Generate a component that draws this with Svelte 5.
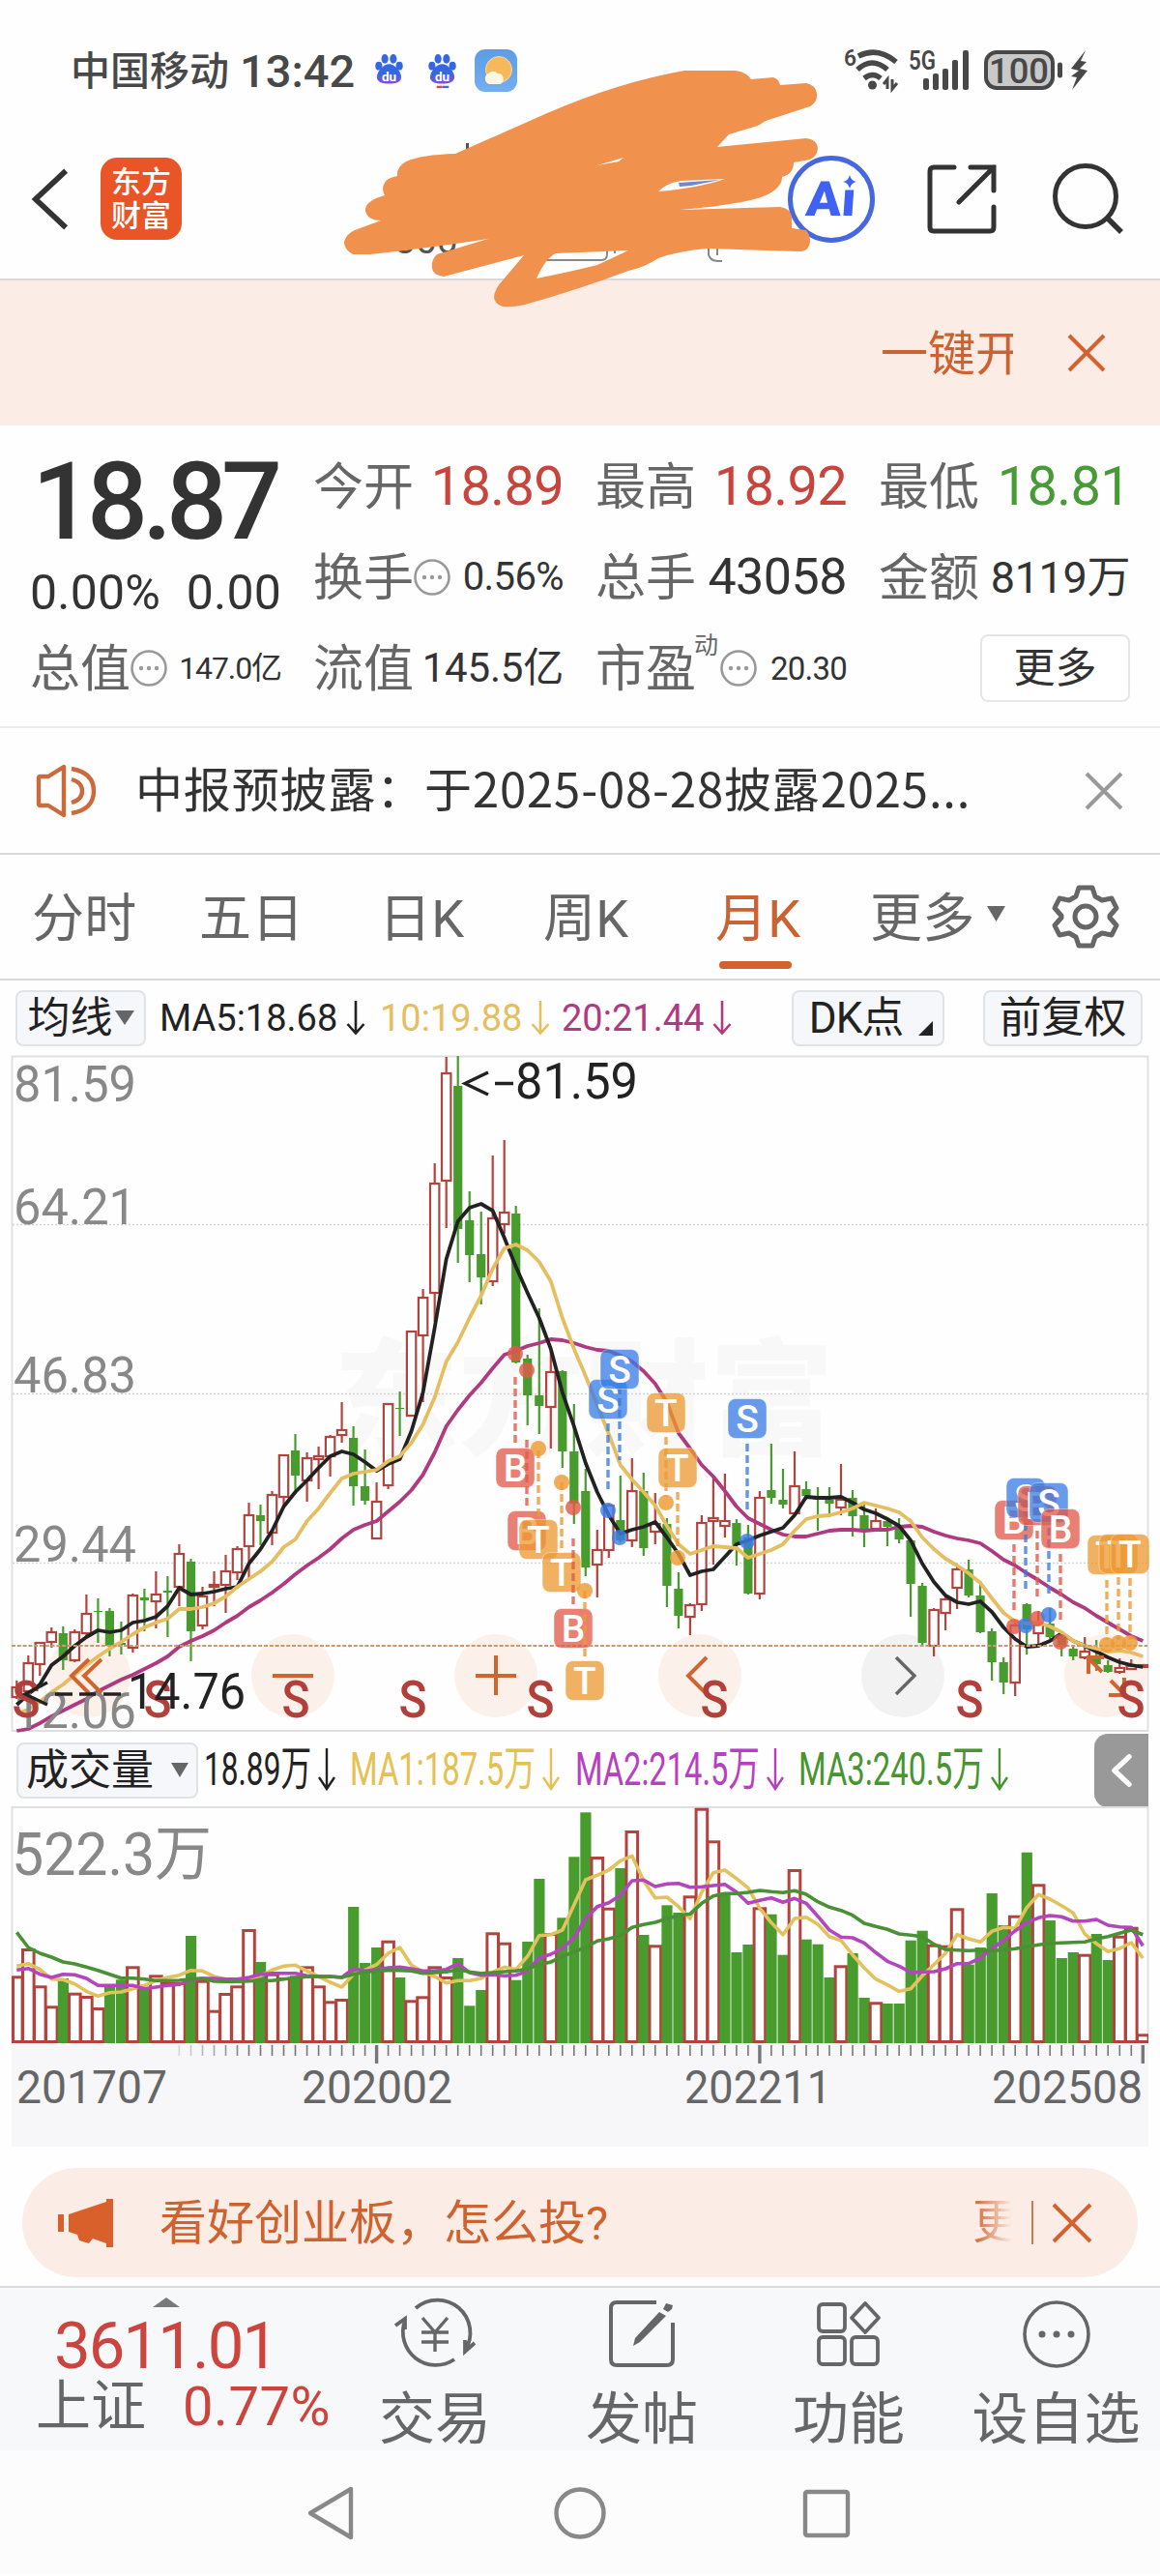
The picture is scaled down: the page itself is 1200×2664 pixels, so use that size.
<script>
  const X0 = 17.3;
  const STEP = 12.01;
  const cx = (i) => +(X0 + i * STEP).toFixed(1);

  // kind, high, body top, body bottom, low (chart units)
  const candles = `r 1738 1745 1755 1757|r 1712 1720 1749 1752|r 1698 1699 1721 1733|r 1683 1688 1698 1704|g 1682 1689 1717 1727|r 1685 1688 1717 1719|r 1649 1669 1689 1692|g 1653 1666 1667 1699|g 1663 1666 1702 1713|g 1677 1699 1701 1711|r 1648 1650 1704 1709|g 1643 1652 1655 1687|r 1625 1649 1656 1684|g 1630 1645 1647 1693|r 1597 1607 1641 1661|g 1612 1615 1687 1718|r 1641 1651 1681 1685|r 1625 1639 1641 1661|r 1608 1625 1639 1668|r 1599 1602 1626 1634|r 1554 1567 1599 1634|g 1556 1567 1573 1598|r 1542 1546 1585 1598|r 1504 1505 1548 1560|g 1483 1500 1526 1545|r 1502 1508 1531 1553|r 1496 1506 1509 1540|r 1484 1486 1506 1527|r 1450 1479 1484 1492|g 1475 1487 1537 1557|g 1499 1537 1552 1556|r 1533 1553 1591 1592|r 1451 1452 1536 1540|g 1439 1456 1457 1485|r 1376 1377 1464 1464|r 1333 1342 1381 1450|r 1203 1224 1337 1367|r 1093 1110 1221 1270|g 1092 1123 1271 1306|g 1232 1262 1298 1326|g 1253 1297 1321 1349|r 1195 1260 1325 1330|r 1179 1254 1266 1276|g 1247 1255 1409 1410|g 1401 1405 1443 1474|g 1353 1443 1454 1483|r 1397 1419 1455 1498|g 1417 1418 1501 1518|g 1452 1501 1555 1576|g 1519 1542 1621 1630|r 1582 1603 1618 1652|r 1555 1557 1603 1611|g 1526 1572 1593 1595|r 1508 1542 1593 1600|g 1523 1542 1601 1609|r 1544 1576 1584 1597|g 1570 1576 1640 1662|g 1626 1643 1671 1684|r 1658 1660 1672 1691|r 1567 1575 1659 1666|r 1527 1570 1573 1618|r 1524 1573 1578 1590|g 1571 1575 1598 1619|g 1577 1590 1648 1649|r 1542 1549 1648 1654|g 1493 1541 1549 1555|g 1519 1551 1556 1560|r 1501 1537 1565 1567|g 1532 1540 1547 1551|g 1538 1550 1551 1583|g 1538 1551 1555 1569|r 1514 1551 1559 1567|g 1541 1549 1568 1589|g 1556 1567 1581 1600|r 1560 1573 1581 1582|g 1571 1573 1579 1599|g 1570 1577 1592 1596|g 1592 1593 1638 1672|g 1637 1640 1699 1701|r 1663 1665 1702 1713|r 1652 1654 1668 1686|r 1620 1623 1642 1664|g 1613 1623 1650 1652|g 1635 1650 1688 1689|g 1684 1687 1719 1738|g 1714 1719 1740 1752|r 1677 1681 1740 1754|g 1658 1659 1685 1711|r 1666 1680 1689 1704|g 1663 1679 1693 1695|g 1690 1693 1703 1713|g 1703 1705 1713 1717|r 1693 1708 1714 1716|g 1696 1713 1721 1728|g 1717 1722 1729 1730|r 1715 1725 1729 1731|r 1716 1723 1726 1727|r 1721 1722 1724 1725`
    .split('|').map((row, i) => {
      const [kind, ...n] = row.split(' ');
      const [high, top, bottom, low] = n.map(Number);
      return { kind, high, top, bottom, low, x: cx(i) };
    });

  const ma5 = [1763,1752,1742,1722,1713,1702,1693,1686,1688,1686,1678,1676,1672,1661,1642,1649,1648,1646,1643,1641,1617,1602,1583,1558,1543,1531,1518,1506,1501,1504,1512,1521,1514,1509,1480,1440,1373,1302,1263,1249,1245,1252,1280,1310,1337,1363,1395,1440,1475,1513,1543,1567,1586,1582,1579,1574,1590,1607,1629,1625,1623,1610,1597,1593,1588,1584,1580,1567,1548,1549,1549,1548,1554,1561,1565,1571,1578,1593,1617,1636,1650,1657,1659,1656,1667,1683,1695,1703,1702,1697,1689,1697,1702,1708,1714,1719,1722,1724];
  const ma10 = [1772,1768,1760,1750,1742,1732,1722,1713,1705,1698,1690,1683,1678,1674,1664,1664,1662,1658,1651,1641,1633,1625,1615,1600,1592,1573,1560,1544,1529,1524,1522,1520,1511,1506,1492,1473,1445,1408,1388,1363,1340,1312,1291,1287,1293,1305,1325,1363,1395,1423,1453,1483,1515,1530,1543,1557,1578,1597,1607,1603,1599,1600,1601,1611,1607,1603,1597,1583,1571,1568,1567,1564,1560,1554,1557,1560,1564,1573,1590,1602,1612,1619,1627,1637,1653,1668,1677,1679,1678,1682,1688,1697,1702,1705,1708,1707,1709,1713];
  const ma20 = [1790,1788,1782,1775,1769,1763,1757,1749,1743,1737,1732,1726,1720,1713,1703,1697,1692,1686,1678,1671,1662,1655,1647,1638,1628,1619,1611,1602,1591,1582,1577,1573,1563,1553,1541,1525,1502,1475,1458,1443,1430,1415,1401,1397,1392,1389,1385,1386,1389,1393,1396,1397,1402,1408,1418,1431,1450,1482,1498,1515,1527,1542,1558,1570,1576,1582,1587,1589,1589,1586,1583,1582,1582,1583,1582,1582,1579,1578,1579,1584,1588,1591,1593,1596,1604,1613,1619,1627,1634,1642,1649,1657,1663,1671,1678,1685,1692,1697];

  const volY = (v) => +(1790 + v / 3).toFixed(1);
  const volumes = 'r760 r675 r790 r853 g768 r812 r822 r858 g795 g772 r730 g795 r757 r780 r780 g636 r773 r866 r813 r790 r615 g717 r752 r765 g760 r730 r790 r838 r831 g546 g720 g672 r650 g765 r835 r823 r730 r762 g705 g853 g804 r625 r656 g773 g654 g459 r627 g580 g391 g253 r390 r548 g426 r309 g633 r664 g541 g564 r511 r239 r340 g503 g687 g663 r547 g569 g695 r429 g647 g662 g765 r727 g690 g828 r841 g846 g846 g650 g620 r662 r665 r550 g725 g672 g504 g603 r572 g377 r475 g588 g705 g687 r692 g630 g711 r635 r608 r940'
    .split(' ').map((v, i) => ({ kind: v[0], top: volY(+v.slice(1)), x: cx(i) }));
  const v1 = [730,722,740,770,772,785,808,823,812,810,800,790,775,765,758,743,745,762,770,772,768,760,742,730,727,745,762,780,795,755,742,725,690,672,727,748,762,782,775,775,768,748,733,740,700,635,632,618,540,462,448,432,403,388,465,518,516,545,583,500,440,432,458,487,550,595,632,582,578,600,638,650,695,735,770,788,808,800,760,725,690,632,645,655,622,610,612,548,508,522,542,565,630,660,685,675,657,705].map(volY);
  const v2 = [742,737,755,765,755,757,768,790,790,790,790,800,795,790,787,772,768,768,770,770,765,755,752,752,752,760,762,762,765,738,745,740,735,733,738,745,745,740,722,750,758,757,760,758,745,705,693,675,642,583,545,533,510,465,463,483,475,473,485,484,480,476,500,535,526,518,532,520,535,575,618,640,642,658,688,715,730,750,748,747,738,722,722,705,675,650,620,595,580,573,577,590,590,585,603,608,610,667].map(volY);
  const v3 = [625,672,690,702,717,723,733,743,755,767,767,770,775,775,774,770,768,777,778,778,776,775,775,770,766,763,762,762,765,755,748,745,743,743,745,752,750,748,740,748,752,750,747,745,738,725,717,700,685,672,652,645,635,610,601,594,583,573,568,535,512,505,505,501,495,499,502,496,507,530,547,557,572,597,607,616,630,634,638,662,678,680,682,680,682,680,676,670,664,659,658,656,655,645,638,628,618,632].map(volY);

  const line = (ys) => ys.map((y, i) => `${cx(i)},${y}`).join(' ');

  const tone = { B: '#e25a48', S: '#3a7de6', T: '#ee9a33' };
  // letter, x, badge centre, marker dot, dashed line start and end
  const marks = [
    ['B', 533, 1518, 1400, 1424, 1492], ['B', 545, 1583, 1417, 1489, 1557],
    ['T', 557, 1592, 1498, 1500, 1570], ['T', 581, 1626, 1533, 1533, 1604],
    ['B', 593, 1684, 1559, 1591, 1659], ['T', 605, 1738, 1645, 1645, 1713],
    ['S', 629, 1447, 1562, 1472, 1540], ['S', 641, 1416, 1590, 1434, 1510],
    ['T', 689, 1461, 1554, 1486, 1548], ['T', 701, 1518, 1611, 1543, 1604],
    ['S', 773, 1467, 1594, 1493, 1561], ['B', 1049, 1572, 1682, 1597, 1665],
    ['S', 1061, 1549, 1681, 1575, 1643], ['B', 1073, 1557, 1674, 1583, 1651],
    ['S', 1085, 1554, 1670, 1580, 1648], ['B', 1097, 1581, 1698, 1607, 1675],
    ['T', 1145, 1608, 1701, 1634, 1696], ['T', 1157, 1607, 1699, 1631, 1696],
    ['T', 1169, 1607, 1699, 1632, 1696]
  ].map(([k, x, y, dot, a, b]) => ({ k, x, y, dot, a, b }));

  const events = [27, 163, 306, 427, 559, 739, 1003, 1170];
  const priceScale = [['81.59', 1139], ['64.21', 1266], ['46.83', 1440], ['29.44', 1615], ['12.06', 1787]];
  const volLegend = [
    { text: '18.89万', x: 211, w: 111, c: '#222' },
    { text: 'MA1:187.5万', x: 362, w: 192, c: '#e6c052' },
    { text: 'MA2:214.5万', x: 595, w: 191, c: '#b63fc2' },
    { text: 'MA3:240.5万', x: 826, w: 192, c: '#479430' }
  ];
</script>

{#snippet info()}
  <svg class="info" viewBox="0 0 38 38"><circle cx="19" cy="19" r="17.5" fill="none" stroke="#999" stroke-width="2.6" /><circle cx="11" cy="19" r="2.2" /><circle cx="19" cy="19" r="2.2" /><circle cx="27" cy="19" r="2.2" /></svg>
{/snippet}

{#snippet down()}
  <svg class="down" viewBox="0 0 20 36"><path d="M10 0V33M1.5 24L10 33.5L18.5 24" fill="none" stroke="currentColor" stroke-width="2.6" /></svg>
{/snippet}

{#snippet paw(bar)}
  <svg class="paw" viewBox="0 0 30 38">
    <defs><linearGradient id="pawfill" x2="0" y2="1"><stop offset=".5" stop-color="#3568e0" /><stop offset="1" stop-color="#8a4be0" /></linearGradient></defs>
    <g fill="#3568e0"><ellipse cx="4" cy="14" rx="3.700" ry="4.600" /><ellipse cx="10.500" cy="6.500" rx="3.700" ry="5" /><ellipse cx="19.500" cy="6.500" rx="3.700" ry="5" /><ellipse cx="26" cy="14" rx="3.700" ry="4.600" /></g>
    <path d="M15 12c6 0 13 8 13 14 0 5-5 7-13 7S2 31 2 26c0-6 7-14 13-14z" fill="url(#pawfill)" />
    <text x="15" y="30" text-anchor="middle" font-size="14" font-weight="700" fill="#fff">du</text>
    {#if bar}<path d="M9 36.500h6" stroke="#d04848" stroke-width="2.400" /><path d="M15 36.500h7" stroke="#3f6be0" stroke-width="2.400" />{/if}
  </svg>
{/snippet}

<main>
  <div class="status">
    <span class="carrier">中国移动</span><span class="clock">13:42</span>
    {@render paw(false)}
    {@render paw(true)}
    <svg class="weather" viewBox="0 0 44 44"><defs><linearGradient id="sky" x2="0" y2="1"><stop offset="0" stop-color="#5a9de8" /><stop offset="1" stop-color="#74aef0" /></linearGradient></defs><rect width="44" height="44" rx="11" fill="url(#sky)" /><circle cx="25" cy="21" r="13.500" fill="#f5b95c" stroke="#fbd9a0" /><path d="M15 36a6 6 0 0 1-1-11 6.500 6.500 0 0 1 10 0c7-1 8 11 1 11z" fill="#fff6e4" /></svg>
    <svg class="radio" viewBox="870 48 260 50">
      <g fill="#484848" font-weight="600"><text x="874" y="68" font-size="23" textLength="13" lengthAdjust="spacingAndGlyphs">6</text><text x="941" y="72" font-size="27" textLength="28" lengthAdjust="spacingAndGlyphs">5G</text></g>
      <g fill="none" stroke="#484848" stroke-width="5.500"><path d="M889 58q20-10 39 6" /><path d="M888 72q15-14 31 0" /><path d="M895 81q9-7 17 0" /></g>
      <circle cx="903.500" cy="88" r="4.500" fill="#484848" />
      <path d="M919 92V82l-4 5M924 82v10l5-6" fill="none" stroke="#484848" stroke-width="3" />
      <g fill="#484848"><rect x="956" y="81" width="6" height="12" rx="2" /><rect x="966" y="76" width="6" height="17" rx="2" /><rect x="976" y="71" width="6" height="22" rx="2" /><rect x="986" y="62" width="6" height="31" rx="2" /><rect x="997" y="52" width="6" height="41" rx="2" /></g>
      <rect x="1021" y="54" width="69" height="37" rx="11" fill="#c9c9c9" stroke="#484848" stroke-width="4" />
      <text x="1024" y="86" font-size="37" font-weight="500" fill="#484848" textLength="62" lengthAdjust="spacingAndGlyphs">100</text>
      <path d="M1097.500 67v11" stroke="#484848" stroke-width="5" stroke-linecap="round" />
      <path d="M1124 52L1109 71l8 2-8 6 6 1-5 13 16-20-8-2 7-7-6-1z" fill="#484848" />
    </svg>
  </div>

  <header>
    <svg class="back" viewBox="0 0 40 68"><path d="M37 3L4 34L37 65" fill="none" stroke="#333" stroke-width="6" /></svg>
    <div class="logo"><span>东方</span><span>财富</span></div>
    <svg class="ai" viewBox="0 0 90 90"><circle cx="45" cy="45" r="42.500" fill="#fff" stroke="#4667e0" stroke-width="5" /><text x="18" y="62" font-size="50" font-weight="900" fill="#3f62f4" textLength="52" lengthAdjust="spacingAndGlyphs" transform="skewX(-4) translate(4 0)">Aı</text><path d="M64 20q1.500 6 7 7q-5.500 1-7 7q-1.500-6-7-7q5.500-1 7-7z" fill="#3f62f4" /></svg>
    <svg class="share" viewBox="0 0 72 72"><path d="M28 3H7Q3 3 3 7V65Q3 69 7 69H65Q69 69 69 65V44M45 3H69V27M69 3L33 39" fill="none" stroke="#333" stroke-width="5" stroke-linecap="round" /></svg>
    <svg class="search" viewBox="0 0 74 74"><circle cx="34" cy="34" r="31.500" fill="none" stroke="#333" stroke-width="5" /><path d="M56 56L71 71" stroke="#333" stroke-width="5.500" /></svg>
  </header>

  <section class="banner"><span>一键开</span><svg viewBox="0 0 40 40"><path d="M2 2L38 38M38 2L2 38" stroke="#d2622f" stroke-width="4" /></svg></section>

  <section class="quote">
    <div class="last"><b>18.87</b><p><span>0.00%</span><span>0.00</span></p></div>
    <div class="cell"><label>今开</label><i class="v55 up">18.89</i></div>
    <div class="cell"><label>最高</label><i class="v55 up">18.92</i></div>
    <div class="cell"><label>最低</label><i class="v55 dn">18.81</i></div>
    <div class="cell"><label>换手</label>{@render info()}<i class="v38">0.56%</i></div>
    <div class="cell"><label>总手</label><i class="v52">43058</i></div>
    <div class="cell"><label>金额</label><i class="v44">8119万</i></div>
    <div class="cell"><label>总值</label>{@render info()}<i class="v32">147.0亿</i></div>
    <div class="cell"><label>流值</label><i class="v41">145.5亿</i></div>
    <div class="cell"><label>市盈<sup>动</sup></label>{@render info()}<i class="v33">20.30</i></div>
    <div class="cell"><button class="more">更多</button></div>
  </section>

  <section class="notice">
    <svg class="speaker" viewBox="0 0 64 54"><path d="M3 14Q3 12 5 12H13L29 2V52L13 42H5Q3 42 3 40Z" fill="none" stroke="#cb6a3c" stroke-width="4.400" stroke-linejoin="round" /><path d="M37 15Q48 18 48 27T37 39M37 4Q60 8 60 27T37 50" fill="none" stroke="#cb6a3c" stroke-width="4.400" /></svg>
    <span>中报预披露：于2025-08-28披露2025...</span>
    <svg class="close" viewBox="0 0 38 38"><path d="M1 1L37 37M37 1L1 37" stroke="#999" stroke-width="4" /></svg>
  </section>

  <nav class="tabs">
    <span>分时</span><span>五日</span><span>日K</span><span>周K</span><span class="on">月K</span><span>更多<svg viewBox="0 0 19 16"><path d="M0 0H19L9.500 16Z" fill="#666" /></svg></span>
    <svg class="gear" viewBox="0 0 66 66"><path d="M26 3H40L43 12L50 16L60 14L65 24L58 32V34L65 42L60 52L50 50L43 54L40 63H26L23 54L16 50L6 52L1 42L8 34V32L1 24L6 14L16 16L23 12Z" fill="none" stroke="#666" stroke-width="5" stroke-linejoin="round" /><circle cx="33" cy="33" r="11" fill="none" stroke="#666" stroke-width="5" /></svg>
  </nav>

  <div class="legend">
    <button class="chip avg">均线<svg viewBox="0 0 20 15"><path d="M0 0H20L10 15Z" fill="#666" /></svg></button>
    <span class="m5">MA5:18.68{@render down()}</span><span class="m10">10:19.88{@render down()}</span><span class="m20">20:21.44{@render down()}</span>
    <button class="chip dk">DK点<svg viewBox="0 0 15 15"><path d="M15 0V15H0Z" fill="#222" /></svg></button>
    <button class="chip adj">前复权</button>
  </div>

  <svg class="chart" viewBox="0 1091 1200 702">
    <text x="345" y="1494" font-size="130" font-weight="900" fill="#f8f8f8" textLength="518" lengthAdjust="spacingAndGlyphs">东方财富</text>
    <path d="M12.500 1092.500H1187.500V1790H12.500Z" fill="none" stroke="#dfdfdf" stroke-width="1.800" />
    <path d="M13 1266.500H1187M13 1441.500H1187M13 1616.500H1187" stroke="#d4d4d4" stroke-width="1.300" stroke-dasharray="2 2" />
    {#each [92, 303, 513, 724, 934, 1144] as x}<circle cx={x} cy="1733" r="43" fill={x === 934 ? '#f2f2f2' : '#fcf1ea'} />{/each}
    {#each candles as c}
      {#if c.kind === 'r'}
        <path d="M{c.x} {c.high}V{c.top}M{c.x} {c.bottom}V{c.low}" stroke="#b1443f" stroke-width="2.2" />
        <rect x={c.x - 4.7} y={c.top} width="9.4" height={Math.max(c.bottom - c.top, 1)} fill="#fff" fill-opacity=".85" stroke="#b1443f" stroke-width="2.2" />
      {:else}
        <path d="M{c.x} {c.high}V{c.low}" stroke="#489c2e" stroke-width="2.2" />
        <rect x={c.x - 4.6} y={c.top} width="9.2" height={c.bottom - c.top} fill="#489c2e" />
      {/if}
    {/each}
    <g fill="none" stroke-width="3.800" stroke-linejoin="round">
      <polyline points={line(ma20)} stroke="#b03a80" /><polyline points={line(ma5)} stroke="#222" /><polyline points={line(ma10)} stroke="#e6be62" />
    </g>
    {#each priceScale as [t, y]}<text x="14" {y} font-size="51" fill="#888" textLength="127" lengthAdjust="spacingAndGlyphs">{t}</text>{/each}
    <path d="M12 1702H1187" stroke="#c59a76" stroke-width="1.800" stroke-dasharray="4 1.800" />
    {#each marks as m}
      <path d="M{m.x} {m.a}V{m.b}" stroke={tone[m.k]} stroke-width="3.400" stroke-dasharray="8 4" opacity=".8" />
      <circle cx={m.x} cy={m.dot} r="8" fill={tone[m.k]} opacity=".82" />
      <rect x={m.x - 20} y={m.y - 20.5} width="40" height="41" rx="8" fill={tone[m.k]} stroke="#fff" stroke-opacity=".5" stroke-width="1" opacity=".76" />
      <text x={m.x} y={m.y + 14} font-size="39" font-weight="500" text-anchor="middle" fill="#fff">{m.k}</text>
    {/each}
    <g fill="none" stroke="#cf6631" stroke-width="4">
      <path d="M92 1716L74 1733L92 1751M105 1716L87 1733L105 1751" /><path d="M282 1733H324" /><path d="M492 1733H534M513 1712V1753" /><path d="M731 1714L712 1733L731 1752" />
      <path d="M927 1714L946 1733L927 1752" stroke="#666" stroke-width="3.400" />
      <path d="M1140 1729L1126 1715M1126 1731V1714H1142M1149 1738L1163 1752M1163 1735V1753H1147" />
    </g>
    {#each events as x}<text {x} y="1776" font-size="53" font-weight="500" text-anchor="middle" fill="#b2403a" textLength="29" lengthAdjust="spacingAndGlyphs">S</text>{/each}
    <g fill="none" stroke="#222" stroke-width="3.400"><path d="M49 1740L26 1752L49 1763M57 1752H75M82 1752H99M107 1752H125" /><path d="M505 1109L481 1120.500L505 1132M512 1120.500H531" /></g>
    <g font-size="51" fill="#222"><text x="132" y="1767" textLength="122" lengthAdjust="spacingAndGlyphs">14.76</text><text x="533" y="1136" textLength="127" lengthAdjust="spacingAndGlyphs">81.59</text></g>
  </svg>

  <div class="vol-bar">
    <button class="chip vol">成交量<svg viewBox="0 0 18 15"><path d="M0 0H18L9 15Z" fill="#666" /></svg></button>
    <svg class="vol-legend" viewBox="205 1793 927 75">
      {#each volLegend as l}
        <text x={l.x} y="1846" font-size="49" fill={l.c} textLength={l.w} lengthAdjust="spacingAndGlyphs">{l.text}</text>
        <path d="M{l.x + l.w + 16} 1808V1849M{l.x + l.w + 8} 1838L{l.x + l.w + 16} 1850L{l.x + l.w + 24} 1838" fill="none" stroke={l.c} stroke-width="2.400" />
      {/each}
    </svg>
    <div class="drawer"><svg viewBox="0 0 22 36"><path d="M19 3L3 18L19 33" fill="none" stroke="#fff" stroke-width="5.500" stroke-linecap="round" stroke-linejoin="round" /></svg></div>
  </div>

  <svg class="volume" viewBox="0 1868 1200 352">
    <defs><clipPath id="plot"><rect x="12" y="1868" width="1176" height="246" /></clipPath></defs>
    <rect x="12" y="2113" width="1176" height="107" fill="#f7f7fa" />
    <path d="M12.500 2113V1869H1187.500V2113" fill="none" stroke="#dfdfdf" stroke-width="1.800" />
    <text x="12" y="1939" font-size="62" fill="#888" textLength="207" lengthAdjust="spacingAndGlyphs">522.3万</text>
    <g clip-path="url(#plot)">
      {#each volumes as v, i}
        {#if v.kind === 'r'}<rect x={i ? v.x - 5.8 : 13.5} y={v.top + 1.5} width={i ? 11.6 : 9.6} height={2111 - v.top - 1} fill="#fff" stroke="#b1443f" stroke-width="3" />
        {:else}<rect x={v.x - 5.5} y={v.top} width="11.2" height={2113 - v.top} fill="#489c2e" />{/if}
      {/each}
    </g>
    <g fill="none" stroke-width="3.600" stroke-linejoin="round"><polyline points={line(v1)} stroke="#e2c25c" /><polyline points={line(v2)} stroke="#b345bd" /><polyline points={line(v3)} stroke="#4a9034" /></g>
    {#each candles as c, i}
      {#if i >= 14}<path d="M{c.x} 2115V{i === 31 || i === 64 || i === 97 ? 2134 : 2126}" stroke="#777" stroke-width={i === 31 || i === 64 || i === 97 ? 3.4 : 1.6} opacity={Math.min(1, (i - 12) / 8)} />{/if}
    {/each}
    <g font-size="48" fill="#666"><text x="17" y="2175" textLength="156" lengthAdjust="spacingAndGlyphs">201707</text><text x="312" y="2175" textLength="156" lengthAdjust="spacingAndGlyphs">202002</text><text x="708" y="2175" textLength="152" lengthAdjust="spacingAndGlyphs">202211</text><text x="1026" y="2175" textLength="156" lengthAdjust="spacingAndGlyphs">202508</text></g>
  </svg>

  <div class="promo">
    <svg class="horn" viewBox="0 0 58 50"><path d="M0 16H6V34H0ZM11 16L50 3V0H57V50H50V46L36 41L32 46L22 43L20 37L11 34Z" fill="#d9602b" /></svg>
    <span>看好创业板，怎么投?</span><em>更</em><hr />
    <svg class="x" viewBox="0 0 40 40"><path d="M1 1L39 39M39 1L1 39" stroke="#d2622f" stroke-width="4" /></svg>
  </div>

  <footer>
    <div class="index"><svg viewBox="0 0 28 10"><path d="M0 10L14 0L28 10Z" fill="#77797c" /></svg><b>3611.01</b><p>上证<i>0.77%</i></p></div>
    <div class="act"><svg viewBox="0 0 84 72"><g fill="none" stroke="#666" stroke-width="3.800"><path d="M22 9A34 34 0 0 1 73 53M62 62A34 34 0 0 1 11 22M1 27L11 20V31M83 45L73 54V42" /><path d="M29 19L42 34L55 19M42 34V54M28 34H56M28 44H56" stroke-width="3.400" /></g></svg><span>交易</span></div>
    <div class="act"><svg viewBox="0 0 84 72"><path d="M57 3H16Q10 3 10 9V62Q10 68 16 68H68Q74 68 74 62V24" fill="none" stroke="#666" stroke-width="4" /><path d="M67 4L74 6L73 10L69 13L64 10ZM60 13L67 17L40 44L33 48L35 40Z" fill="#666" /></svg><span>发帖</span></div>
    <div class="act"><svg viewBox="0 0 84 72"><g fill="none" stroke="#666" stroke-width="3.800"><rect x="11" y="5" width="27" height="28" rx="4" /><rect x="11" y="39" width="27" height="28" rx="4" /><rect x="45" y="39" width="27" height="28" rx="4" /><path d="M59 4L73 19L59 34L45 19Z" stroke-linejoin="round" /></g></svg><span>功能</span></div>
    <div class="act"><svg viewBox="0 0 84 72"><circle cx="42" cy="36" r="33" fill="none" stroke="#666" stroke-width="3.600" /><g fill="#666"><circle cx="27" cy="36" r="3.500" /><circle cx="42" cy="36" r="3.500" /><circle cx="57" cy="36" r="3.500" /></g></svg><span>设自选</span></div>
  </footer>

  <div class="system">
    <svg viewBox="0 0 54 58"><path d="M46 4V54L4 29Z" fill="none" stroke="#888" stroke-width="4.400" stroke-linejoin="round" /></svg>
    <svg viewBox="0 0 54 58"><circle cx="27" cy="29" r="24.500" fill="none" stroke="#888" stroke-width="4.400" /></svg>
    <svg viewBox="0 0 54 58"><rect x="5" y="7" width="44" height="45" rx="2" fill="none" stroke="#888" stroke-width="4.400" /></svg>
  </div>

  <!-- marker scribble laid over the stock title -->
  <svg class="scribble" viewBox="340 60 520 270">
    <g fill="#555" font-size="39"><text x="408" y="262">300</text><path d="M482 148h3v8h-3z" /><path d="M556 269H622q6 0 6-6V256M636 262V256M733 254v9q1 6 9 7h5M742 256v8" fill="none" stroke="#888" stroke-width="2" /></g>
    <path fill-rule="evenodd" fill="#f0914d" d="M708 73H760Q772 74 777 82L800 80Q806 82 807 88L834 86Q844 88 845 97Q846 105 838 110L792 125L784 130L754 139L742 152L834 143Q845 144 846 153Q846 161 838 165L821 168Q821 180 809 183Q809 195 790 203Q770 211 704 217L807 214Q819 216 819 226V236L834 238Q838 243 838 250Q837 261 825 260L731 257Q700 260 681 267Q668 276 650 280Q600 299 543 315Q530 318 520 317Q511 314 511 307Q512 298 520 290L542 264L459 286Q447 284 447 277Q446 269 452 263L505 247Q440 257 383 263H365Q356 258 356 250Q358 242 367 238L394 228Q380 228 378 218Q377 208 398 202Q394 195 398 189Q400 184 411 182Q410 173 420 167Q436 160 471 159L566 117Q640 85 708 73ZM555 288Q590 281 618 274L650 259L575 262Q565 266 555 288ZM681 198Q688 190 704 187L750 185Q725 194 681 198ZM618 171L645 163L640 167Z" />
    <path d="M702 189L745 186L715 192L703 193Z" fill="#7088cf" />
  </svg>
</main>

<style>
  :global(body) { margin: 0; background: #fefefe; }
  main { position: relative; width: 1200px; height: 2664px; overflow: hidden; background: #fefefe; color: #333; font-family: Roboto, "Noto Sans CJK SC", sans-serif; line-height: 1; }
  main * { box-sizing: border-box; }
  svg { display: block; flex: none; overflow: visible; }
  p { margin: 0; }
  button { font-family: inherit; line-height: 1; padding: 0; white-space: nowrap; }
  i, em { font-style: normal; }
  span, label { white-space: nowrap; }

  .status { display: flex; align-items: center; height: 115px; padding: 31px 71px 0 73px; color: #484848; }
  .carrier { font-size: 41px; font-weight: 500; padding-top: 3px; }
  .clock { margin: 0 19px 0 11px; font-size: 47px; font-weight: 500; width: 118px; }
  .paw { width: 29px; height: 38px; margin-left: 3px; margin-right: 23px; }
  .weather { width: 44px; height: 44px; margin-left: -4px; }
  .radio { width: 260px; height: 50px; margin-left: auto; }

  header { display: flex; align-items: center; height: 175px; padding: 8px 37px 0 33px; border-bottom: 2px solid #d8d8d8; }
  .back { width: 38px; height: 68px; }
  .logo { display: flex; flex-direction: column; align-items: center; justify-content: center; gap: 4px; width: 84px; height: 85px; margin-left: 33px; border-radius: 17px; background: #ea5528; color: #fff; font-size: 31px; font-weight: 500; }
  .ai { width: 90px; height: 90px; margin-left: 627px; }
  .share { width: 72px; height: 72px; margin-left: 54px; }
  .search { width: 74px; height: 74px; margin-left: auto; }

  .banner { display: flex; align-items: center; justify-content: flex-end; height: 150px; padding-right: 56px; background: #fbede5; color: #cc6232; font-size: 49px; }
  .banner span { width: 137px; overflow: hidden; height: 60px; line-height: 62px; margin-top: 2px; }
  .banner svg { width: 40px; height: 40px; margin-left: 56px; }

  .quote { display: grid; grid-template-columns: 260px 259px 260px 260px; column-gap: 33px; grid-template-rows: 94px 94px 94px; height: 313px; padding: 16px 29px 0 31px; border-bottom: 2px solid #ececec; }
  .last { grid-row: span 2; display: flex; flex-direction: column; }
  .last b { font-size: 111px; font-weight: 500; letter-spacing: -6px; padding: 8px 0 0 2px; }
  .last p { display: flex; justify-content: space-between; margin-top: 13px; font-size: 50px; letter-spacing: .200px; }
  .cell { display: flex; align-items: center; white-space: nowrap; }
  .cell label { position: relative; padding-top: 3px; font-size: 52px; color: #666; }
  .cell i { margin-left: auto; }
  .info { width: 38px; height: 38px; fill: #999; }
  sup { position: absolute; left: 102px; top: -9px; font-size: 25px; line-height: 1; }
  .cell:nth-child(10) .info { margin-left: 25px; }
  .v55 { font-size: 56px; letter-spacing: -.700px; }
  .v52 { font-size: 52px; letter-spacing: -.500px; }
  .v44 { font-size: 45px; letter-spacing: -.400px; }
  .v41 { font-size: 42px; letter-spacing: -.200px; }
  .v38 { font-size: 40px; letter-spacing: -.600px; }
  .v33 { font-size: 33px; letter-spacing: -.800px; }
  .v32 { font-size: 32px; letter-spacing: -1.100px; }
  .up { color: #c8453d; }
  .dn { color: #479a35; }
  .more { width: 155px; height: 70px; margin-left: auto; border: 2px solid #e6e6e6; border-radius: 8px; background: #fff; color: #333; font-size: 43px; }

  .notice { display: flex; align-items: center; height: 131px; padding: 0 39px 0 37px; border-bottom: 2px solid #d8d8d8; }
  .speaker { width: 64px; height: 54px; }
  .notice span { margin-left: 39px; padding-bottom: 8px; font-family: "Noto Sans CJK SC", sans-serif; font-size: 49px; letter-spacing: .850px; }
  .close { width: 38px; height: 38px; margin-left: auto; }

  .tabs { display: grid; grid-template-columns: 173px 186px 170px 178px 160px 187px 66px; align-items: center; height: 130px; padding-left: 33px; border-bottom: 2px solid #d8d8d8; font-size: 54px; color: #666; }
  .tabs span { position: relative; padding-top: 6px; letter-spacing: .200px; }
  .tabs span:nth-child(6) svg { display: inline-block; width: 19px; height: 16px; margin: 0 0 16px 13px; }
  .tabs .on { color: #cb6232; }
  .tabs .on::after { content: ""; position: absolute; left: 4px; top: 76px; width: 75px; height: 8px; border-radius: 4px; background: #d2622f; }
  .gear { width: 66px; height: 66px; margin-left: 3px; }

  .legend { display: flex; align-items: center; height: 77px; padding: 0 16px; color: #222; font-size: 38px; }
  .chip { display: flex; align-items: center; justify-content: center; height: 58px; border: 2px solid #e0e2e5; border-radius: 8px; background: #f6f7fa; color: #222; font-size: 44px; }
  .legend span { display: flex; align-items: center; letter-spacing: 0; }
  .down { width: 20px; height: 36px; margin-left: 9px; }
  .avg { width: 135px; }
  .avg svg { width: 20px; height: 15px; margin-left: 2px; }
  .m5 { width: 228px; margin-left: 14px; }
  .m10 { width: 188px; color: #e6be62; }
  .m20 { width: 190px; color: #b03a80; }
  .dk { width: 158px; margin-left: 48px; letter-spacing: -1px; }
  .dk svg { width: 15px; height: 15px; margin: 22px -6px 0 16px; }
  .adj { width: 165px; margin-left: 40px; }
  .chart { width: 1200px; height: 702px; }

  .vol-bar { display: flex; align-items: center; height: 75px; padding-left: 17px; }
  .vol { width: 188px; }
  .vol svg { width: 18px; height: 15px; margin-left: 18px; }
  .vol-legend { width: 927px; height: 75px; }
  .drawer { display: flex; align-items: center; justify-content: center; width: 56px; height: 76px; border-radius: 14px 0 0 14px; background: #999; }
  .drawer svg { width: 21px; height: 36px; }
  .volume { width: 1200px; height: 352px; }

  .promo { display: flex; align-items: center; height: 113px; margin: 22px 23px 9px; padding: 0 48px 0 37px; border-radius: 57px; background: #fbede5; color: #cf6330; font-size: 49px; }
  .horn { width: 58px; height: 50px; }
  .promo span { margin-left: 47px; padding-top: 2px; }
  .promo em { margin-left: auto; width: 41px; overflow: hidden; line-height: 60px; color: transparent; background: linear-gradient(90deg, #cf6330, #fbede5); background-clip: text; }
  .promo hr { width: 2px; height: 45px; margin: 0 20px; border: 0; background: #cf7a50; }
  .x { width: 40px; height: 40px; }

  footer { display: grid; grid-template-columns: 343px 214px 214px 214px 215px; height: 170px; border-top: 2px solid #d9dbde; background: #f7f8fa; color: #666; }
  .index { display: flex; flex-direction: column; padding-left: 37px; }
  .index svg { width: 28px; height: 10px; margin: 10px 0 0 121px; }
  .index b { margin: 7px 0 0 19px; font-size: 67px; font-weight: 400; color: #cb443d; letter-spacing: -1.900px; }
  .index p { display: flex; align-items: center; font-size: 57px; margin-top: 0; }
  .index i { margin-left: 38px; font-size: 56px; letter-spacing: .600px; color: #cb443d; }
  .act { display: flex; flex-direction: column; align-items: center; font-size: 58px; padding-top: 12px; }
  .act svg { width: 84px; height: 72px; }
  .act span { margin-top: 23px; }

  .system { display: flex; justify-content: space-between; height: 129px; padding: 36px 318px 0 317px; background: #fcfcfc; }
  .system svg { width: 54px; height: 58px; }
  .scribble { position: absolute; left: 340px; top: 60px; width: 520px; height: 270px; }
</style>
